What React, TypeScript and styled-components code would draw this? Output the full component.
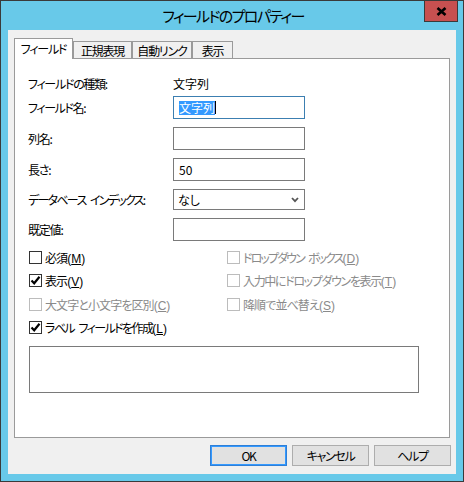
import React from 'react';
import styled, { createGlobalStyle } from 'styled-components';

const Global = createGlobalStyle`
  html, body { margin: 0; padding: 0; background: #ffffff; }
  body {
    font-family: "Noto Sans CJK JP", "Noto Sans", sans-serif;
    font-size: 12px;
    font-feature-settings: "palt" 1;
    letter-spacing: -0.9px;
    color: #000;
  }
  * { box-sizing: border-box; }
`;

const Window = styled.div`
  width: 464px;
  height: 482px;
  border: 1px solid #3a3a3a;
  background: #68c9e9;
  display: flex;
  flex-direction: column;
`;

const TitleBar = styled.div`
  position: relative;
  height: 29px;
  display: flex;
  align-items: center;
  justify-content: center;
  font-size: 15px;
  letter-spacing: -1.6px;
  color: #000;
  padding-bottom: 1px;
  padding-left: 2px;
`;

const CloseButton = styled.div`
  position: absolute;
  top: -1px;
  right: 5px;
  width: 34px;
  height: 22px;
  background: #c75050;
  border: 1px solid #3a3a3a;
  display: flex;
  align-items: center;
  justify-content: center;
`;

const Client = styled.div`
  flex: 1;
  margin: 0 7px 7px;
  background: #f0f0f0;
  padding: 8px 6px 8px 6px;
  display: flex;
  flex-direction: column;
`;

const TabStrip = styled.div`
  display: flex;
  align-items: flex-end;
  height: 20px;
`;

const Tab = styled.div<{ $active?: boolean; $w: number }>`
  position: relative;
  z-index: ${(p) => (p.$active ? 1 : 0)};
  width: ${(p) => p.$w}px;
  height: ${(p) => (p.$active ? 21 : 17)}px;
  margin-bottom: ${(p) => (p.$active ? -1 : 0)}px;
  border: 1px solid #9a9a9a;
  border-bottom: none;
  background: ${(p) => (p.$active ? '#ffffff' : '#f0f0f0')};
  display: flex;
  align-items: center;
  justify-content: center;
  padding-bottom: ${(p) => (p.$active ? 1 : 0)}px;
  white-space: nowrap;
  letter-spacing: -1.2px;
`;

const Panel = styled.div`
  height: 380px;
  border: 1px solid #9a9a9a;
  background: #ffffff;
  padding: 14px 0 0 13px;
  display: flex;
  flex-direction: column;
`;

const FieldRow = styled.div<{ $h: number; $mt: number }>`
  display: grid;
  grid-template-columns: 145px 132px;
  align-items: center;
  height: ${(p) => p.$h}px;
  margin-top: ${(p) => p.$mt}px;
`;

const Label = styled.span<{ $ls?: number }>`
  white-space: nowrap;
  letter-spacing: ${(p) => p.$ls ?? -1.2}px;
`;

const Value = styled.span`
  white-space: nowrap;
  letter-spacing: 0;
`;

const TextBox = styled.div<{ $focused?: boolean }>`
  height: 23px;
  border: 1px solid ${(p) => (p.$focused ? '#3c7fb1' : '#7a7a7a')};
  background: #fff;
  display: flex;
  align-items: center;
  padding: 0 5px;
  letter-spacing: 0;
`;

const Selection = styled.span`
  background: #3399ff;
  color: #fff;
  line-height: 14px;
  height: 14px;
  display: inline-flex;
  align-items: center;
`;

const Caret = styled.span`
  width: 1px;
  height: 13px;
  background: #000;
`;

const Combo = styled.div`
  height: 21px;
  border: 1px solid #7a7a7a;
  background: #fff;
  display: flex;
  align-items: center;
  justify-content: space-between;
  padding: 0 5px 0 4px;
`;

const CheckGrid = styled.div`
  display: grid;
  grid-template-columns: 198px 1fr;
  row-gap: 7.5px;
  margin-top: 8px;
  padding-left: 1px;
`;

const CheckItem = styled.div<{ $disabled?: boolean; $ls: number }>`
  display: flex;
  align-items: center;
  gap: 3px;
  height: 16px;
  color: ${(p) => (p.$disabled ? '#8a8a8a' : '#000')};
  white-space: nowrap;
  letter-spacing: ${(p) => p.$ls}px;
`;

const AccessKey = styled.span`
  letter-spacing: 0;
  font-family: "Liberation Sans", "Noto Sans", sans-serif;
  font-size: 12px;
`;

const Box = styled.span<{ $disabled?: boolean }>`
  width: 13px;
  height: 13px;
  border: 1px solid ${(p) => (p.$disabled ? '#bcbcbc' : '#333333')};
  background: #fff;
  display: flex;
  align-items: center;
  justify-content: center;
  flex: none;
`;

const Memo = styled.div`
  margin-top: 10px;
  margin-left: 1px;
  width: 390px;
  height: 47px;
  border: 1px solid #7a7a7a;
  background: #fff;
`;

const ButtonRow = styled.div`
  display: flex;
  justify-content: flex-end;
  gap: 5px;
  margin-top: 7px;
  margin-right: -1px;
`;

const Button = styled.div<{ $default?: boolean }>`
  width: 77px;
  height: 21px;
  background: #e1e1e1;
  border: 1px solid ${(p) => (p.$default ? '#2f7fd6' : '#adadad')};
  box-shadow: ${(p) => (p.$default ? 'inset 0 0 0 1px #3399ff' : 'none')};
  display: flex;
  align-items: center;
  justify-content: center;
  letter-spacing: -1.3px;
`;

const Check = () => (
  <svg width="11" height="11" viewBox="0 0 11 11">
    <path d="M1.5 5.5 L4.2 8.3 L9.5 1.8" fill="none" stroke="#000" strokeWidth="2.2" />
  </svg>
);

const Chevron = () => (
  <svg width="8" height="6" viewBox="0 0 8 6">
    <path d="M1 1 L4 4.2 L7 1" fill="none" stroke="#555" strokeWidth="1.8" />
  </svg>
);

const CloseGlyph = () => (
  <svg width="11" height="9" viewBox="0 0 11 9">
    <path d="M1.5 1 L9.5 8 M9.5 1 L1.5 8" fill="none" stroke="#000" strokeWidth="2.6" />
  </svg>
);

type CB = { text: string; acc: string; ls: number; checked?: boolean; disabled?: boolean };

const CheckBox = ({ text, acc, ls, checked, disabled }: CB) => (
  <CheckItem $disabled={disabled} $ls={ls}>
    <Box $disabled={disabled}>{checked && <Check />}</Box>
    <span>
      {text}
      <AccessKey>
        (<u>{acc}</u>)
      </AccessKey>
    </span>
  </CheckItem>
);

const checks: (CB | null)[] = [
  { text: '必須', acc: 'M', ls: -0.9 },
  { text: 'ドロップダウン\u2002ボックス', acc: 'D', ls: -1.9, disabled: true },
  { text: '表示', acc: 'V', ls: -0.9, checked: true },
  { text: '入力中にドロップダウンを表示', acc: 'T', ls: -1.35, disabled: true },
  { text: '大文字と小文字を区別', acc: 'C', ls: -0.9, disabled: true },
  { text: '降順で並べ替え', acc: 'S', ls: -0.9, disabled: true },
  { text: 'ラベル\u2002フィールドを作成', acc: 'L', ls: -1.6, checked: true },
  null,
];

export default function App() {
  return (
    <>
      <Global />
      <Window>
        <TitleBar>
          フィールドのプロパティー
          <CloseButton>
            <CloseGlyph />
          </CloseButton>
        </TitleBar>
        <Client>
          <TabStrip>
            <Tab $active $w={59}>フィールド</Tab>
            <Tab $w={59}>正規表現</Tab>
            <Tab $w={60}>自動リンク</Tab>
            <Tab $w={41}>表示</Tab>
          </TabStrip>
          <Panel>
            <FieldRow $h={20} $mt={0}>
              <Label $ls={-1.3}>フィールドの種類:</Label>
              <Value>文字列</Value>
            </FieldRow>
            <FieldRow $h={23} $mt={3}>
              <Label $ls={-1.4}>フィールド名:</Label>
              <TextBox $focused>
                <Selection>文字列</Selection>
                <Caret />
              </TextBox>
            </FieldRow>
            <FieldRow $h={23} $mt={8}>
              <Label>列名:</Label>
              <TextBox />
            </FieldRow>
            <FieldRow $h={23} $mt={8}>
              <Label>長さ:</Label>
              <TextBox>50</TextBox>
            </FieldRow>
            <FieldRow $h={21} $mt={8}>
              <Label $ls={-1.7}>データベース{'\u2002'}インデックス:</Label>
              <Combo>
                <Value>なし</Value>
                <Chevron />
              </Combo>
            </FieldRow>
            <FieldRow $h={23} $mt={8}>
              <Label>既定値:</Label>
              <TextBox />
            </FieldRow>
            <CheckGrid>
              {checks.map((c, i) =>
                c ? <CheckBox key={i} {...c} /> : <span key={i} />
              )}
            </CheckGrid>
            <Memo />
          </Panel>
          <ButtonRow>
            <Button $default>OK</Button>
            <Button>キャンセル</Button>
            <Button>ヘルプ</Button>
          </ButtonRow>
        </Client>
      </Window>
    </>
  );
}
